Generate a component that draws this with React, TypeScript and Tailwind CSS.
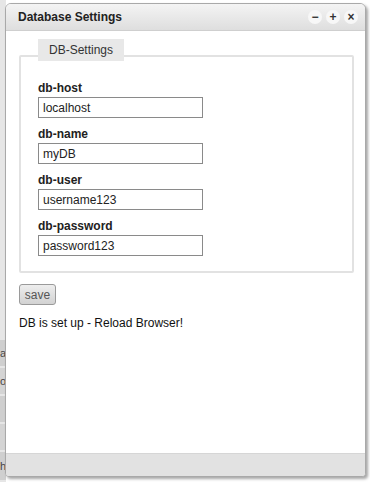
import React from 'react';

const fields = [
  { label: 'db-host', value: 'localhost', type: 'text' },
  { label: 'db-name', value: 'myDB', type: 'text' },
  { label: 'db-user', value: 'username123', type: 'text' },
  { label: 'db-password', value: 'password123', type: 'text' },
];

const WinButton: React.FC<{ glyph: string }> = ({ glyph }) => (
  <span className="w-[14px] h-[14px] rounded-full bg-[#f7f7f7] flex items-center justify-center text-[12px] leading-none font-bold text-[#333]">
    {glyph}
  </span>
);

export default function App() {
  return (
    <div
      className="relative w-[370px] h-[482px] bg-white overflow-hidden"
      style={{ fontFamily: '"Liberation Sans", Arial, sans-serif' }}
    >
      {/* page behind the window */}
      <div className="flex flex-col w-[6px] h-full pt-[340px] gap-[2px] bg-[#e6e6e6]">
        <div className="h-[26px] bg-[#cfcfcf] text-[11px] text-[#444] overflow-hidden leading-[26px]">a</div>
        <div className="h-[26px] bg-[#d4d4d4] text-[11px] text-[#444] overflow-hidden leading-[26px]">o</div>
        <div className="h-[26px] bg-[#cfcfcf]" />
        <div className="h-[26px] bg-[#d4d4d4]" />
        <div className="h-[28px] bg-[#cfcfcf] text-[11px] text-[#444] overflow-hidden leading-[28px]">h</div>
      </div>

      {/* dialog window */}
      <div className="absolute left-[5px] top-[3px] w-[361px] h-[474px] flex flex-col bg-white border border-[#a9a9a9] rounded-t-[6px] rounded-b-[4px] shadow-[2px_2px_3px_rgba(0,0,0,0.35)] overflow-hidden">
        <div className="h-[27px] shrink-0 flex items-center justify-between pl-[12px] pr-[7px] bg-gradient-to-b from-[#f4f4f4] to-[#dedede] border-b border-[#cfcfcf]">
          <span className="text-[12px] font-bold text-[#222]">Database Settings</span>
          <div className="flex items-center gap-[4px]">
            <WinButton glyph="−" />
            <WinButton glyph="+" />
            <WinButton glyph="×" />
          </div>
        </div>

        <div className="flex-1 flex flex-col pt-[8px] pl-[13px] pr-[11px]">
          <div className="relative z-10 ml-[19px] w-[86px] h-[22px] bg-[#e8e8e8] flex items-center justify-center text-[12px] text-[#333]">
            DB-Settings
          </div>
          <div className="-mt-[6px] h-[218px] border-2 border-[#e2e2e2] rounded-[2px] pt-[24px] pl-[17px] flex flex-col">
            {fields.map((f) => (
              <div key={f.label} className="flex flex-col h-[46px]">
                <span className="text-[12px] font-bold text-[#222] leading-[14px] h-[16px]">{f.label}</span>
                <input
                  type={f.type}
                  defaultValue={f.value}
                  className="w-[165px] h-[21px] border border-[#8a8a8a] px-[4px] text-[12px] text-[#222] outline-none bg-white"
                />
              </div>
            ))}
          </div>

          <button className="mt-[11px] self-start w-[37px] h-[21px] rounded-[3px] border border-[#9a9a9a] bg-gradient-to-b from-[#eeeeee] to-[#d2d2d2] text-[12px] text-[#555] leading-none">
            save
          </button>

          <p className="mt-[9px] text-[12px] text-[#111]">DB is set up - Reload Browser!</p>
        </div>

        <div className="h-[23px] shrink-0 bg-[#e2e2e2] border-t border-[#d6d6d6]" />
      </div>
    </div>
  );
}
